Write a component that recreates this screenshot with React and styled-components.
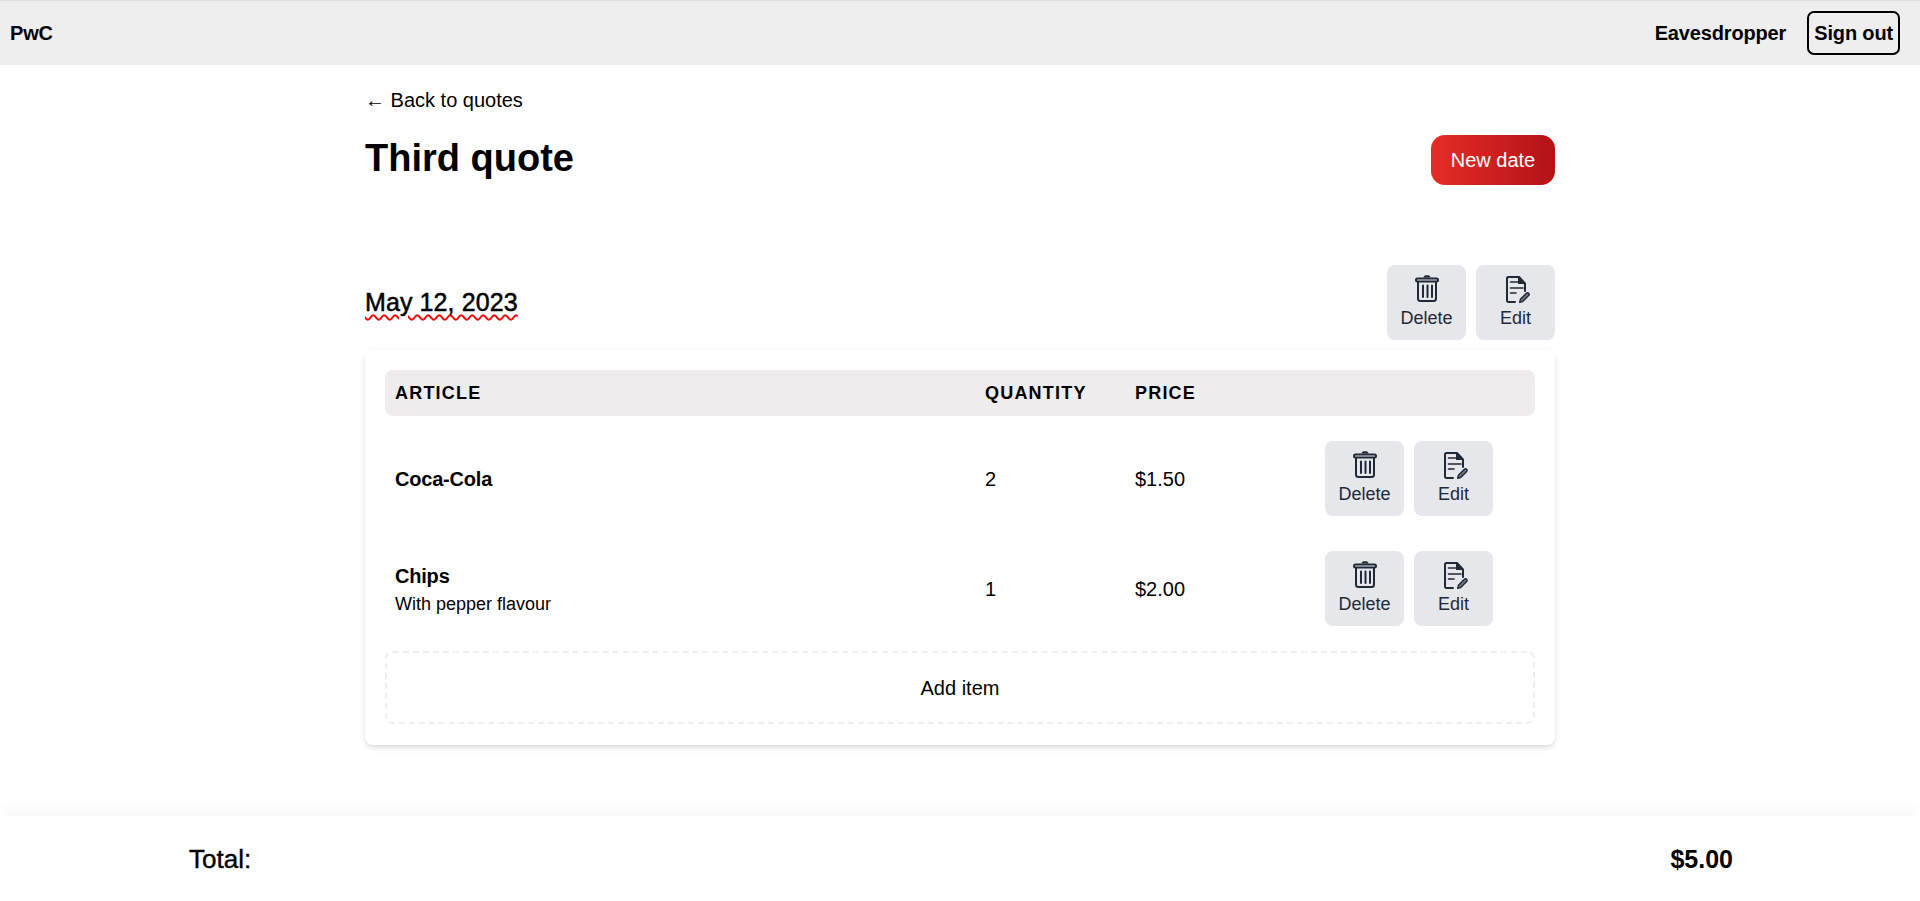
import React from "react"
import styled, { createGlobalStyle } from "styled-components"

const GlobalStyle = createGlobalStyle`
  html, body {
    margin: 0;
    padding: 0;
    background: #fff;
    color: #000;
    font-family: "Liberation Sans", Arial, sans-serif;
    font-size: 20px;
  }
  * { box-sizing: border-box; }
`

const Page = styled.div`
  min-height: 100vh;
  display: flex;
  flex-direction: column;
`

const Header = styled.header`
  height: 65px;
  flex: none;
  display: flex;
  align-items: center;
  justify-content: space-between;
  padding: 0 20px 0 10px;
  background: #eee;
  border-top: 1px solid #ddd;
  font-weight: bold;
  letter-spacing: -0.15px;
`

const UserBox = styled.div`
  display: flex;
  align-items: center;
  gap: 21px;
`

const SignOut = styled.button`
  height: 44px;
  padding: 0 5px;
  background: transparent;
  color: #000;
  border: 2px solid #000;
  border-radius: 7px;
  font: bold 20px "Liberation Sans", Arial, sans-serif;
  letter-spacing: -0.15px;
`

const Main = styled.main`
  width: 1190px;
  margin: 0 auto;
  flex: 1;
  padding-top: 24px;
`

const BackLink = styled.a`
  display: block;
  line-height: 23px;
  color: #000;
`

const TitleRow = styled.div`
  display: flex;
  justify-content: space-between;
  align-items: flex-start;
  margin-top: 23px;
`

const Title = styled.h1`
  margin: 0;
  font-size: 38px;
  line-height: 46px;
  font-weight: bold;
`

const NewDate = styled.button`
  width: 124px;
  height: 50px;
  border: 0;
  border-radius: 14px;
  background: linear-gradient(90deg, #e52d27, #b31217);
  color: #fff;
  font: 20px "Liberation Sans", Arial, sans-serif;
`

const DateRow = styled.div`
  display: flex;
  justify-content: space-between;
  align-items: center;
  margin-top: 80px;
`

const DateLabel = styled.h2`
  margin: 0;
  font-size: 25px;
  font-weight: normal;
  letter-spacing: 0.1px;
  -webkit-text-stroke: 0.5px #000;
  text-decoration: underline wavy #f00 1.5px;
  text-underline-offset: 3px;
`

const Actions = styled.div`
  display: flex;
  gap: 10px;
`

const ActionButton = styled.button`
  width: 79px;
  height: 75px;
  display: flex;
  flex-direction: column;
  align-items: center;
  justify-content: flex-start;
  padding: 9px 0 0;
  border: 0;
  border-radius: 8px;
  background: #e5e7eb;
  color: #1f2937;
  font: 18px/22px "Liberation Sans", Arial, sans-serif;

  svg {
    display: block;
    width: 30px;
    height: 30px;
    margin-bottom: 3px;
  }
`

const Card = styled.section`
  margin-top: 10px;
  padding: 20px 20px 21px;
  background: #fff;
  border-radius: 8px;
  box-shadow: 0 4px 6px -1px rgba(0, 0, 0, 0.1), 0 2px 4px -2px rgba(0, 0, 0, 0.1), 0 0 6px rgba(0, 0, 0, 0.04);
`

const columns = "590px 150px 190px 1fr"

const TableHead = styled.div`
  display: grid;
  grid-template-columns: ${columns};
  align-items: center;
  height: 46px;
  margin-bottom: 10px;
  background: #eeecec;
  border-radius: 8px;
  font-size: 18px;
  font-weight: bold;
  letter-spacing: 1.2px;
  text-transform: uppercase;
  > span { padding-left: 10px; }
`

const Row = styled.div`
  display: grid;
  grid-template-columns: ${columns};
  align-items: center;
  padding: 15px 0;
  margin-bottom: 5px;
`

const Cell = styled.div`
  padding: 2px 0 0 10px;
`

const ActionsCell = styled.div`
  padding-left: 10px;
`

const ItemName = styled.div`
  font-weight: bold;
  letter-spacing: -0.2px;
`

const ItemNote = styled.div`
  margin-top: 6px;
  font-size: 18px;
`

const AddItem = styled.button`
  display: block;
  width: 100%;
  height: 73px;
  margin-top: 10px;
  padding-top: 3px;
  background: #fff;
  border: 2px dashed #eee;
  border-radius: 8px;
  color: #000;
  font: 20px "Liberation Sans", Arial, sans-serif;
`

const Footer = styled.footer`
  height: 85px;
  flex: none;
  display: flex;
  align-items: center;
  justify-content: space-between;
  padding: 2px 187px 0 189px;
  background: #fff;
  font-size: 25px;
  box-shadow: 0 -10px 15px -3px rgba(0, 0, 0, 0.03);
`

const TotalLabel = styled.span`
  font-size: 26px;
  -webkit-text-stroke: 0.4px #000;
`

const TotalValue = styled.strong`
  font-weight: bold;
`

const TrashIcon = () => (
  <svg viewBox="0 0 30 30" fill="none" stroke="currentColor" strokeWidth="2" strokeLinecap="round" strokeLinejoin="round">
    <path d="M11.500 3.500c0-1.700 1.500-2.300 3.500-2.300s3.500.6 3.500 2.300z" fill="currentColor" stroke="none" />
    <rect x="4" y="4.500" width="22" height="3" rx="1.500" />
    <path d="M6 8v16.500A2.500 2.500 0 0 0 8.500 27h13a2.500 2.500 0 0 0 2.500-2.500V8" />
    <path d="M11 11.500v11.500M15.500 11.500v11.500M20 11.500v11.500" />
  </svg>
)

const EditIcon = () => (
  <svg viewBox="0 0 30 30" fill="none" stroke="currentColor" strokeWidth="2" strokeLinecap="round" strokeLinejoin="round">
    <path d="M14 28H7.500A1.500 1.500 0 0 1 6 26.500V4.500A1.500 1.500 0 0 1 7.500 3H18l6 6.500V17" />
    <path d="M17 2.500l7.500 7.500H17z" fill="currentColor" stroke="none" />
    <path d="M9.500 8h7M9.500 14h12.500M9.500 19h5.500" strokeWidth="1.600" />
    <path d="M18.700 28.300l.7-3 6-6c.7-.7 1.700-.7 2.300 0 .6.600.6 1.600 0 2.300l-6 6z" fill="currentColor" fillOpacity="0.6" strokeWidth="1.400" />
  </svg>
)

const RowActions = () => (
  <Actions>
    <ActionButton>
      <TrashIcon />
      Delete
    </ActionButton>
    <ActionButton>
      <EditIcon />
      Edit
    </ActionButton>
  </Actions>
)

const items = [
  { name: "Coca-Cola", quantity: 2, price: "$1.50" },
  { name: "Chips", note: "With pepper flavour", quantity: 1, price: "$2.00" },
]

const App = () => (
  <Page>
    <GlobalStyle />
    <Header>
      <span>PwC</span>
      <UserBox>
        <span>Eavesdropper</span>
        <SignOut>Sign out</SignOut>
      </UserBox>
    </Header>

    <Main>
      <BackLink>← Back to quotes</BackLink>
      <TitleRow>
        <Title>Third quote</Title>
        <NewDate>New date</NewDate>
      </TitleRow>

      <DateRow>
        <DateLabel>May 12, 2023</DateLabel>
        <RowActions />
      </DateRow>

      <Card>
        <TableHead>
          <span>Article</span>
          <span>Quantity</span>
          <span>Price</span>
        </TableHead>
        {items.map((item) => (
          <Row key={item.name}>
            <Cell>
              <ItemName>{item.name}</ItemName>
              {item.note && <ItemNote>{item.note}</ItemNote>}
            </Cell>
            <Cell>{item.quantity}</Cell>
            <Cell>{item.price}</Cell>
            <ActionsCell>
              <RowActions />
            </ActionsCell>
          </Row>
        ))}
        <AddItem>Add item</AddItem>
      </Card>
    </Main>

    <Footer>
      <TotalLabel>Total:</TotalLabel>
      <TotalValue>$5.00</TotalValue>
    </Footer>
  </Page>
)

export default App
